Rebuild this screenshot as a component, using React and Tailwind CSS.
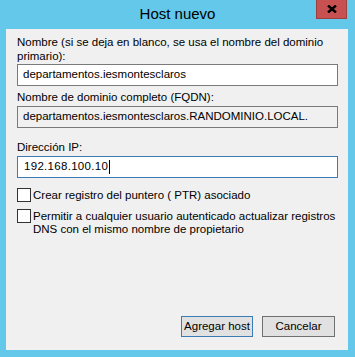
export default function App() {
  const font = { fontFamily: '"Liberation Sans", Arial, sans-serif' };
  return (
    <div className="w-[355px] h-[357px] bg-[#63c8ea] flex flex-col text-black" style={font}>
      <div className="relative h-[29px] shrink-0 flex items-center justify-center">
        <span className="text-[15px] leading-none mt-[-2px]">Host nuevo</span>
        <div className="absolute left-[316px] top-0 w-[31px] h-[19px] bg-[#c75050] border border-t-0 border-[#9b3f3f] flex items-center justify-center">
          <svg width="10" height="8" viewBox="0 0 10 8">
            <path d="M1 0.5 L9 7.5 M9 0.5 L1 7.5" stroke="#000" strokeWidth="2.4" />
          </svg>
        </div>
      </div>
      <div className="ml-[6px] mr-[7px] h-[321px] bg-[#f0f0f0] flex flex-col pl-[11px] pr-[10px] text-[11.5px]">
        <div className="mt-[6px] leading-[14px] whitespace-nowrap">
          Nombre (si se deja en blanco, se usa el nombre del dominio
          <br />
          primario):
        </div>
        <div className="mt-[1px] h-[22px] bg-white border border-[#7a7a7a] flex items-center pl-[5px]">
          departamentos.iesmontesclaros
        </div>
        <div className="mt-[4px] leading-[14px]">Nombre de dominio completo (FQDN):</div>
        <div className="mt-[2px] h-[22px] bg-[#f0f0f0] border border-[#7a7a7a] flex items-center pl-[5px]">
          departamentos.iesmontesclaros.RANDOMINIO.LOCAL.
        </div>
        <div className="mt-[12px] leading-[14px]">Dirección IP:</div>
        <div className="mt-[2px] h-[22px] bg-white border border-[#3b7cb4] flex items-center pl-[6px]">
          <span className="tracking-[0.3px]">192.168.100.10</span>
          <span className="w-px h-[14px] bg-black ml-[1px]" />
        </div>
        <div className="mt-[10px] flex items-start">
          <div className="w-[14px] h-[14px] bg-white border border-[#333] shrink-0" />
          <span className="ml-[2px] leading-[14px] whitespace-nowrap">Crear registro del puntero ( PTR) asociado</span>
        </div>
        <div className="mt-[7px] flex items-start">
          <div className="w-[14px] h-[14px] bg-white border border-[#333] shrink-0" />
          <span className="ml-[2px] leading-[13px] mt-[1px] whitespace-nowrap">
            Permitir a cualquier usuario autenticado actualizar registros
            <br />
            DNS con el mismo nombre de propietario
          </span>
        </div>
        <div className="flex-1" />
        <div className="flex justify-end gap-[9px] mb-[13px] pr-[3px]">
          <button className="w-[72px] h-[21px] bg-[#e1e1e1] border border-[#3b7cb4] text-[11.5px] leading-none whitespace-nowrap" style={font}>
            Agregar host
          </button>
          <button className="w-[73px] h-[21px] bg-[#e1e1e1] border border-[#707070] text-[11.5px] leading-none whitespace-nowrap" style={font}>
            Cancelar
          </button>
        </div>
      </div>
      <div className="flex-1" />
    </div>
  );
}
